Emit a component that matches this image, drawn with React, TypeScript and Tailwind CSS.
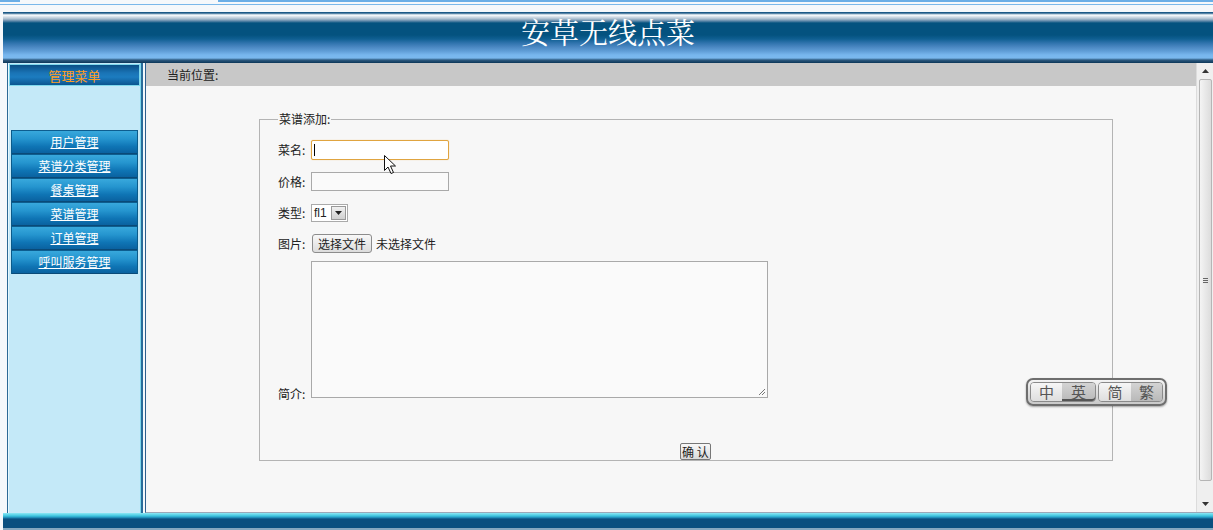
import React from "react"

const menuItems = ["用户管理", "菜谱分类管理", "餐桌管理", "菜谱管理", "订单管理", "呼叫服务管理"]

function MenuButton({ label }: { label: string }) {
  return (
    <div className="h-[24px] border-t border-[#0d5d8f] border-b border-b-[#0a4a78] bg-[linear-gradient(to_bottom,#38a8dc_0%,#2595cf_35%,#0f75b5_70%,#0a62a0_100%)] flex items-center justify-center">
      <a className="text-white text-[12px] underline leading-none cursor-pointer">{label}</a>
    </div>
  )
}

function LangSwitch() {
  return (
    <div className="absolute left-[880px] top-[315px] flex items-center p-[2px] rounded-[7px] border-2 border-[#6e6e6e] bg-[linear-gradient(to_bottom,#f4f4f4,#c9c9c9)] shadow-[0_1px_2px_rgba(0,0,0,0.35)]">
      <div className="flex h-[20px] rounded-[4px] border border-[#8a8a8a]">
        <span className="w-[31px] rounded-l-[3px] flex items-center justify-center text-[15px] leading-[20px] text-[#555] bg-[linear-gradient(to_bottom,#f6f6f6,#dedede)]">中</span>
        <span className="w-[33px] rounded-r-[3px] flex items-center justify-center text-[15px] leading-[20px] text-[#555] bg-[linear-gradient(to_bottom,#d4d4d4,#b9b9b9)] shadow-[inset_0_-2px_0_#555]">英</span>
      </div>
      <div className="ml-[2px] flex h-[20px] rounded-[4px] border border-[#8a8a8a]">
        <span className="w-[32px] rounded-l-[3px] flex items-center justify-center text-[15px] leading-[20px] text-[#555] bg-[linear-gradient(to_bottom,#f6f6f6,#dedede)]">简</span>
        <span className="w-[31px] rounded-r-[3px] flex items-center justify-center text-[15px] leading-[20px] text-[#555] bg-[linear-gradient(to_bottom,#d4d4d4,#b9b9b9)]">繁</span>
      </div>
    </div>
  )
}

export default function App() {
  return (
    <div className="w-[1213px] h-[530px] overflow-hidden bg-[#f5f8fb] text-[12px] text-[#222] font-['Noto_Sans_CJK_SC','Liberation_Sans',sans-serif] leading-none">
      {/* top strip */}
      <div className="h-[12px]">
        <div className="flex h-[2px]">
          <div className="w-[20px] bg-[#6aaee6]" />
          <div className="w-[198px]" />
          <div className="flex-1 bg-[#6aaee6]" />
        </div>
        <div className="mt-[2px] h-px bg-[#7ab8ea]" />
      </div>

      {/* banner */}
      <div className="ml-[3px] h-[51px] flex justify-center bg-[linear-gradient(to_bottom,#1d5a87_0px,#1d5a87_1px,#ffffff_3px,#e8eef4_4px,#a9bccd_7px,#5e87a9_9px,#04527f_11px,#04527f_23px,#0f5f92_27px,#2f73ad_31px,#4a87c2_35px,#5f9dd6_39px,#78b7ee_43px,#7ab8ee_46px,#2d5a80_48px,#0c3658_51px)]">
        <span className="mt-[3px] text-white text-[29px] leading-[34px] font-['Noto_Serif_CJK_SC','Noto_Sans_CJK_SC',serif]">安草无线点菜</span>
      </div>

      <div className="flex h-[450px]">
        {/* sidebar */}
        <div className="ml-[7px] w-[136px] flex border-l border-[#2d6a96]">
          <div className="flex-1 bg-[#c4e9f8] border-l border-[#e6f8ff] border-r border-r-[#7fd8ec] flex flex-col">
            <div className="h-[22px] mt-px border border-[#7fd8ec] bg-[linear-gradient(to_bottom,#0a4f86_0%,#1a74b6_40%,#1c7cc0_60%,#0b5590_100%)] flex items-center justify-center">
              <span className="text-[#ff9d1f] text-[13px]">管理菜单</span>
            </div>
            <div className="mt-[44px] mx-[2px] border-x border-[#0b5a8a]">
              {menuItems.map((m) => (
                <MenuButton key={m} label={m} />
              ))}
            </div>
          </div>
          <div className="w-[2px] bg-[#2a6c9a]" />
        </div>

        {/* main */}
        <div className="ml-[2px] flex-1 flex border-l border-[#2d5f8e] border-b border-b-[#9aa8b8] relative">
          <div className="flex-1 bg-[#f7f7f7] relative">
            <div className="h-[23px] bg-[#c8c8c8] flex items-center pl-[21px]">当前位置:</div>

            <fieldset className="ml-[113px] mt-[25px] w-[854px] border border-[#b4b4b4] pl-[18px] pb-0">
              <legend className="px-[1px] leading-[16px]">菜谱添加:</legend>

              <div className="mt-[13px] flex items-center h-[20px]">
                <span className="w-[33px]">菜名:</span>
                <div className="relative w-[138px] h-[20px] border border-[#e0a440] bg-white rounded-[2px] shadow-[0_0_1px_#f0c070]">
                  <div className="absolute left-[2px] top-[3px] w-px h-[12px] bg-black" />
                </div>
              </div>

              <div className="mt-[12px] flex items-center h-[19px]">
                <span className="w-[33px]">价格:</span>
                <div className="w-[138px] h-[19px] border border-[#a9a9a9] bg-[#fafafa]" />
              </div>

              <div className="mt-[13px] flex items-center h-[18px]">
                <span className="w-[33px]">类型:</span>
                <div className="flex h-[18px] border border-[#aaa] bg-white">
                  <span className="w-[18px] flex items-center pl-[2px] text-[12px] font-['Liberation_Sans',sans-serif]">fl1</span>
                  <span className="w-[15px] m-px flex items-center justify-center bg-[linear-gradient(to_bottom,#f0f0f0,#d0d0d0)] border border-[#999]">
                    <svg width="7" height="4" viewBox="0 0 7 4"><path d="M0 0H7L3.5 4Z" fill="#222" /></svg>
                  </span>
                </div>
              </div>

              <div className="mt-[12px] flex items-center h-[19px]">
                <span className="w-[34px]">图片:</span>
                <button className="h-[19px] px-[5px] border border-[#8c8c8c] rounded-[3px] bg-[linear-gradient(to_bottom,#f8f8f8,#dcdcdc)] text-[12px]">选择文件</button>
                <span className="ml-[4px]">未选择文件</span>
              </div>

              <div className="mt-[8px] flex items-end">
                <span className="w-[33px] mb-[-2px]">简介:</span>
                <div className="w-[457px] h-[137px] border border-[#a9a9a9] bg-[#fafafa] relative">
                  <svg className="absolute right-[1px] bottom-[1px]" width="8" height="8" viewBox="0 0 8 8">
                    <path d="M7 1L1 7M7 4L4 7" stroke="#777" strokeWidth="1" />
                  </svg>
                </div>
              </div>

              <div className="mt-[45px] ml-[402px] mb-0">
                <button className="h-[17px] px-[1px] border border-[#777] rounded-[2px] bg-[linear-gradient(to_bottom,#f8f8f8,#dadada)] text-[12px] leading-none">确 认</button>
              </div>
            </fieldset>

            {/* mouse pointer */}
            <svg className="absolute left-[238px] top-[92px]" width="13" height="20" viewBox="0 0 13 20">
              <path d="M0.5 0.5L0.5 15.5L4 12L7 18.5L9.5 17.5L6.5 11L11.5 11Z" fill="white" stroke="#111" strokeWidth="1" />
            </svg>

            <LangSwitch />
          </div>

          {/* scrollbar */}
          <div className="w-[17px] bg-[#efefef] border-l border-[#dcdcdc] flex flex-col items-center">
            <div className="h-[16px] w-full flex items-center justify-center">
              <svg width="7" height="4" viewBox="0 0 7 4"><path d="M0 4H7L3.5 0Z" fill="#333" /></svg>
            </div>
            <div className="w-[13px] h-[402px] border border-[#b5b5b5] rounded-[2px] bg-[linear-gradient(to_right,#f4f4f4,#dcdcdc)] flex items-center justify-center">
              <svg width="5" height="5" viewBox="0 0 5 5"><path d="M0 0.5H5M0 2.5H5M0 4.5H5" stroke="#666" strokeWidth="1" /></svg>
            </div>
            <div className="flex-1" />
            <div className="h-[16px] w-full flex items-center justify-center">
              <svg width="7" height="4" viewBox="0 0 7 4"><path d="M0 0H7L3.5 4Z" fill="#333" /></svg>
            </div>
          </div>
        </div>
      </div>

      {/* footer */}
      <div className="ml-[3px] h-[17px] bg-[linear-gradient(to_bottom,#8ee8f5_0px,#3cc4de_3px,#1a7fae_5px,#0a4f7f_6px,#0a4f7f_15px,#ffffff_16px,#0a4f7f_17px)]" />
    </div>
  )
}
